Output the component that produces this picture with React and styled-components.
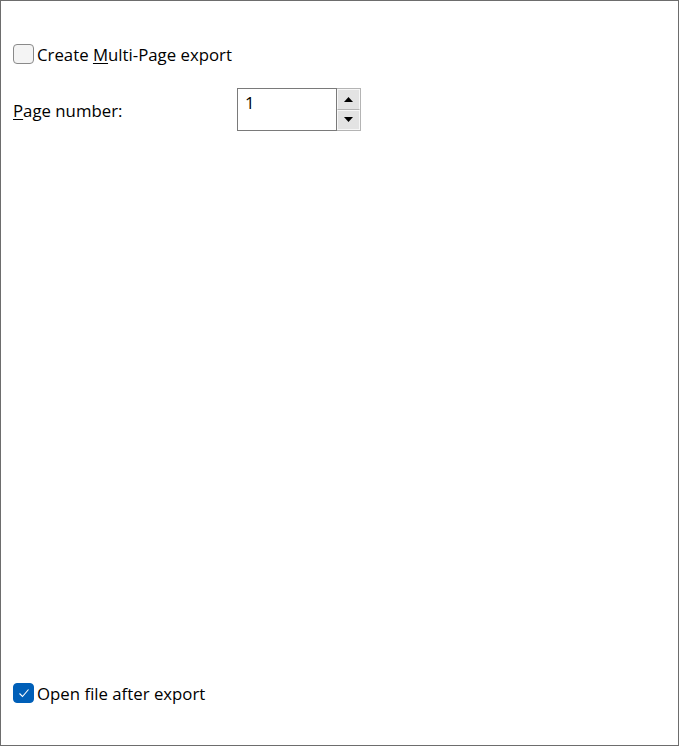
import React, { useState } from "react";
import styled, { createGlobalStyle } from "styled-components";

const GlobalStyle = createGlobalStyle`
    html, body {
        margin: 0;
        padding: 0;
        background: #ffffff;
    }
`

const Window = styled.div`
    box-sizing: border-box;
    width: 679px;
    height: 746px;
    border: 1px solid #6d6d6d;
    display: flex;
    flex-direction: column;
    padding: 43px 12px 42px 12px;
    font-family: "Open Sans", "Noto Sans", sans-serif;
    font-size: 16.8px;
    color: #000000;
    background: #ffffff;
`

const CheckRow = styled.label`
    display: flex;
    align-items: center;
    gap: 3px;
    height: 20px;
    cursor: default;
    margin-top: ${props => props.$bottom ? "auto" : "0"};
`

const Box = styled.span`
    box-sizing: border-box;
    width: 21px;
    height: 20px;
    border-radius: 4px;
    border: 1px solid ${props => props.$checked ? "#005fb8" : "#8a8a8a"};
    background: ${props => props.$checked ? "#005fb8" : "#f4f4f4"};
    display: flex;
    align-items: center;
    justify-content: center;
`

const Key = styled.span`
    text-decoration: underline;
    text-underline-offset: 2px;
`

const FieldRow = styled.div`
    display: flex;
    align-items: flex-start;
    margin-top: 24px;
`

const FieldLabel = styled.div`
    width: 224px;
    padding-top: 11px;
`

const SpinBox = styled.div`
    display: flex;
    height: 43px;
`

const NumberInput = styled.div`
    box-sizing: border-box;
    width: 100px;
    height: 43px;
    border: 1px solid #7a7a7a;
    padding: 3px 7px;
    line-height: 22px;
`

const Buttons = styled.div`
    box-sizing: border-box;
    width: 24px;
    display: flex;
    flex-direction: column;
    border: 1px solid #b4b4b4;
    border-left: none;
`

const SpinButton = styled.div`
    flex: 1;
    box-sizing: border-box;
    background: #e3e3e3;
    border: 1px solid #f7f7f7;
    border-bottom-color: ${props => props.$up ? "#b4b4b4" : "#f7f7f7"};
    display: flex;
    align-items: center;
    justify-content: center;
`

const Arrow = ({ down }) => (
    <svg width="9" height="5" viewBox="0 0 9 5">
        {down
            ? <polygon points="0,0 9,0 4.5,5" fill="#000" />
            : <polygon points="0,5 9,5 4.5,0" fill="#000" />}
    </svg>
)

const Check = () => (
    <svg width="12" height="10" viewBox="0 0 12 10">
        <polyline points="1.5,5.5 4.5,8.5 10.5,1.5" fill="none" stroke="#ffffff" strokeWidth="1.1" />
    </svg>
)

const App = () => {
    const [multi, setMulti] = useState(false)
    const [openAfter, setOpenAfter] = useState(true)

    return (
        <>
            <GlobalStyle />
            <Window>
                <CheckRow onClick={() => setMulti(!multi)}>
                    <Box $checked={multi}>{multi && <Check />}</Box>
                    <span>Create <Key>M</Key>ulti-Page export</span>
                </CheckRow>
                <FieldRow>
                    <FieldLabel><Key>P</Key>age number:</FieldLabel>
                    <SpinBox>
                        <NumberInput>1</NumberInput>
                        <Buttons>
                            <SpinButton $up><Arrow /></SpinButton>
                            <SpinButton><Arrow down /></SpinButton>
                        </Buttons>
                    </SpinBox>
                </FieldRow>
                <CheckRow $bottom onClick={() => setOpenAfter(!openAfter)}>
                    <Box $checked={openAfter}>{openAfter && <Check />}</Box>
                    <span>Open file after export</span>
                </CheckRow>
            </Window>
        </>
    )
}

export default App;
